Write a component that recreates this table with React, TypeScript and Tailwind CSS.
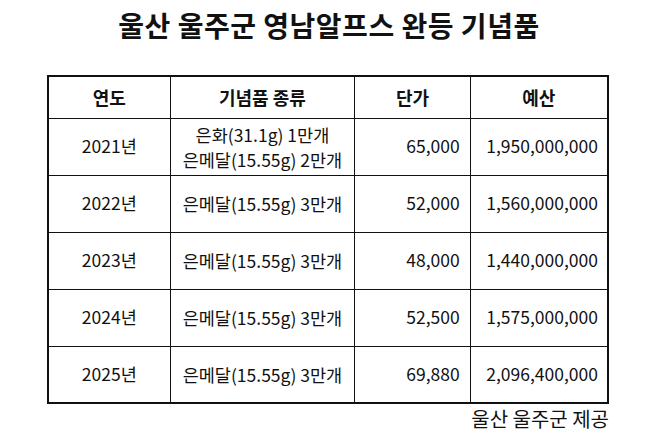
import React from "react";

export default function App() {
  const rows = [
    { year: "2021년", kind: ["은화(31.1g) 1만개", "은메달(15.55g) 2만개"], price: "65,000", budget: "1,950,000,000" },
    { year: "2022년", kind: ["은메달(15.55g) 3만개"], price: "52,000", budget: "1,560,000,000" },
    { year: "2023년", kind: ["은메달(15.55g) 3만개"], price: "48,000", budget: "1,440,000,000" },
    { year: "2024년", kind: ["은메달(15.55g) 3만개"], price: "52,500", budget: "1,575,000,000" },
    { year: "2025년", kind: ["은메달(15.55g) 3만개"], price: "69,880", budget: "2,096,400,000" },
  ];

  return (
    <div
      className="h-[435px] w-[658px] bg-white text-[#111]"
      style={{ fontFamily: '"Noto Sans CJK KR", "Noto Sans", sans-serif' }}
    >
      <h1 className="pt-[5px] text-center text-[28px] font-bold leading-[40px] tracking-[0.5px]">
        울산 울주군 영남알프스 완등 기념품
      </h1>
      <div className="ml-[47px] mt-[30px] w-[562px]">
        <table className="w-full border-collapse border-2 border-[#111] text-[17.5px]">
          <colgroup>
            <col className="w-[123px]" />
            <col className="w-[185px]" />
            <col className="w-[116px]" />
            <col className="w-[138px]" />
          </colgroup>
          <thead>
            <tr className="h-[42px] text-[18px] font-bold">
              <th className="border border-[#111]">연도</th>
              <th className="border border-[#111]">기념품 종류</th>
              <th className="border border-[#111]">단가</th>
              <th className="border border-[#111]">예산</th>
            </tr>
          </thead>
          <tbody>
            {rows.map((r) => (
              <tr key={r.year} className="h-[57px]">
                <td className="border border-[#111] text-center">{r.year}</td>
                <td className="whitespace-nowrap border border-[#111] text-center leading-[25px]">
                  {r.kind.map((k) => (
                    <div key={k}>{k}</div>
                  ))}
                </td>
                <td className="border border-[#111] pr-[10px] text-right">{r.price}</td>
                <td className="border border-[#111] pr-[9px] text-right">{r.budget}</td>
              </tr>
            ))}
          </tbody>
        </table>
        <div className="mt-[1px] text-right text-[20px] leading-[28px]">울산 울주군 제공</div>
      </div>
    </div>
  );
}
